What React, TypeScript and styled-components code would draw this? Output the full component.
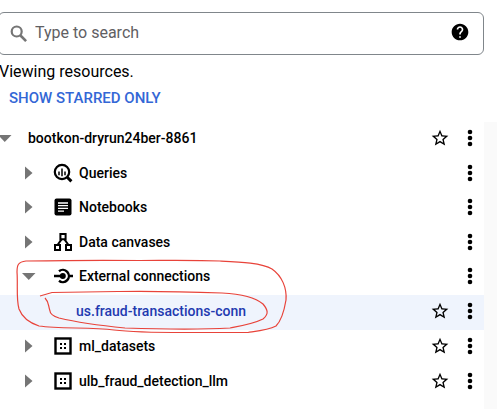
import React, { useState } from "react";
import styled, { createGlobalStyle, css } from "styled-components";
import { MdHelp, MdStarBorder } from "react-icons/md";

const GlobalStyle = createGlobalStyle`
  * { box-sizing: border-box; }
  body {
    margin: 0;
    background: #fff;
    color: #000;
    font-family: Roboto, "Liberation Sans", sans-serif;
    overflow: hidden;
  }
`;

const Explorer = styled.main`
  display: flex;
  flex-direction: column;
  min-height: 100vh;
  padding-top: 12px;
`;

const SearchBox = styled.label`
  display: flex;
  align-items: center;
  height: 43px;
  margin: 0 13px 0 -2px;
  padding: 0 11px;
  border: 1px solid #80868b;
  border-radius: 6px;
  color: #757575;
`;

const SearchInput = styled.input`
  flex: 1;
  min-width: 0;
  padding: 0 8px 2px 7px;
  border: 0;
  outline: 0;
  background: transparent;
  font: 400 16px/20px Roboto, "Liberation Sans", sans-serif;
  color: #000;
  &::placeholder { color: #5f6063; opacity: 1; }
`;

const IconButton = styled.button`
  display: flex;
  align-items: center;
  justify-content: center;
  flex: none;
  width: 24px;
  height: 24px;
  padding: 0;
  border: 0;
  background: none;
  color: #000;
  cursor: pointer;
`;

const HelpButton = styled(IconButton)`
  margin-bottom: 3px;
`;

const Status = styled.p`
  margin: 7px 0 0 -1px;
  font-size: 16px;
  line-height: 20px;
`;

const StarredButton = styled.button`
  align-self: flex-start;
  margin: 6px 0 14px;
  padding: 0 9px;
  border: 0;
  background: none;
  color: #3367d6;
  font: 500 15px/20px Roboto, "Liberation Sans", sans-serif;
  cursor: pointer;
`;

const TreeArea = styled.div`
  position: relative;
  display: grid;
  grid-template-columns: 1fr 13px;
  flex: 1;
`;

const Gutter = styled.div`
  background: #fafafa;
`;

const Tree = styled.ul`
  min-width: 0;
  margin: 0;
  padding: 0;
  list-style: none;
`;

const levelPadding = ["0", "17px", "76px"];

const Row = styled.li<{ $level: number; $selected?: boolean }>`
  display: flex;
  align-items: center;
  height: 34px;
  padding: 0 2px 2px ${(p) => levelPadding[p.$level]};
  &:nth-child(odd) { height: 35px; padding-bottom: 4px; }
  ${(p) =>
    p.$selected &&
    css`
      && { height: 35px; padding-bottom: 4px; }
      background: #eff4fd;
    `}
`;

const Caret = styled(IconButton)<{ $root?: boolean }>`
  color: #757575;
  ${(p) => p.$root && css`margin: 0 11px 0 -7px;`}
`;

const KindIcon = styled.svg`
  flex: none;
  width: 20px;
  height: 20px;
  margin: 0 6px 0 12px;
`;

const nameText = css`
  flex: 1;
  min-width: 0;
  font-size: 14px;
  line-height: 20px;
  font-weight: 500;
  white-space: nowrap;
`;

const Name = styled.span`
  ${nameText}
`;

const NameLink = styled.a`
  ${nameText}
  color: #1f3ab0;
  text-decoration: none;
`;

const StarButton = styled(IconButton)`
  margin-right: 6px;
`;

const Annotation = styled.svg`
  position: absolute;
  top: 133px;
  left: 0;
  width: 300px;
  height: 85px;
  pointer-events: none;
`;

type Kind = "queries" | "notebooks" | "canvases" | "connections" | "dataset";

const kindShapes: Record<Kind, React.ReactNode> = {
  queries: (
    <g fill="none" stroke="currentColor">
      <circle cx="9" cy="9" r="7.2" strokeWidth="2.2" />
      <path d="M14 14l4.4 4.4" strokeWidth="3" />
      <path d="M6 8.5v3.7M9 5.5v7.7M12 8.5v3.7" strokeWidth="1.5" />
    </g>
  ),
  notebooks: (
    <>
      <rect x="1.5" y="1.5" width="17" height="17" rx="2" fill="currentColor" />
      <path d="M5 6h10M5 8.7h10M5 11.4h10M5 14.1h6" stroke="#fff" strokeWidth="1.3" />
    </>
  ),
  canvases: (
    <g fill="none" stroke="currentColor" strokeWidth="2">
      <path d="M7.4 2h5.2v5.2H7.4zM2 13h5v5H2zM13 13h5v5h-5z" />
      <path d="M8.7 7.2L4.5 13M11.3 7.2l4.2 5.8" />
    </g>
  ),
  connections: (
    <g fill="none" stroke="currentColor">
      <path d="M6 5.2A6.1 6.1 0 1 1 6 14.8" strokeWidth="2.4" />
      <path d="M1 10h8M16 10h4" strokeWidth="2.6" />
      <circle cx="9.8" cy="10" r="3" fill="currentColor" stroke="none" />
    </g>
  ),
  dataset: (
    <>
      <rect x="2.5" y="2.5" width="15" height="15" fill="none" stroke="currentColor" strokeWidth="2.4" />
      <path d="M7 7h2v2H7zM11 7h2v2h-2zM7 11h2v2H7zM11 11h2v2h-2z" fill="currentColor" />
    </>
  ),
};

interface Item {
  name: string;
  level: number;
  kind?: Kind;
  open?: boolean;
  starrable?: boolean;
}

const items: Item[] = [
  { name: "bootkon-dryrun24ber-8861", level: 0, open: true, starrable: true },
  { name: "Queries", level: 1, kind: "queries" },
  { name: "Notebooks", level: 1, kind: "notebooks" },
  { name: "Data canvases", level: 1, kind: "canvases" },
  { name: "External connections", level: 1, kind: "connections", open: true },
  { name: "us.fraud-transactions-conn", level: 2, starrable: true },
  { name: "ml_datasets", level: 1, kind: "dataset", starrable: true },
  { name: "ulb_fraud_detection_llm", level: 1, kind: "dataset", starrable: true },
];

function ResourceRow({ item }: { item: Item }) {
  const leaf = item.level === 2;
  return (
    <Row $level={item.level} $selected={leaf}>
      {!leaf && (
        <Caret $root={item.level === 0} aria-label={`Toggle ${item.name}`} aria-expanded={!!item.open}>
          <svg width="14" height="14" viewBox="0 0 14 14" fill="currentColor">
            <path d={item.open ? "M0 4h13.5L6.75 11z" : "M3 .5v13l7.5-6.5z"} />
          </svg>
        </Caret>
      )}
      {item.kind && (
        <KindIcon viewBox="0 0 20 20" aria-hidden="true">
          {kindShapes[item.kind]}
        </KindIcon>
      )}
      {leaf ? <NameLink href="#connection">{item.name}</NameLink> : <Name>{item.name}</Name>}
      {item.starrable && (
        <StarButton aria-label={`Star ${item.name}`}>
          <MdStarBorder size={20} />
        </StarButton>
      )}
      <IconButton aria-label={`Actions for ${item.name}`}>
        <svg width="6" height="18" viewBox="0 0 6 18" fill="currentColor">
          <circle cx="3" cy="3" r="2.3" />
          <circle cx="3" cy="9" r="2.3" />
          <circle cx="3" cy="15" r="2.3" />
        </svg>
      </IconButton>
    </Row>
  );
}

export default function App() {
  const [query, setQuery] = useState("");
  return (
    <>
      <GlobalStyle />
      <Explorer>
        <SearchBox>
          <svg width="18" height="18" viewBox="0 0 18 18" fill="none" stroke="currentColor" aria-hidden="true">
            <circle cx="6.7" cy="6.5" r="5" strokeWidth="2.2" />
            <path d="M10.5 10.5l5.6 5.6" strokeWidth="2.6" />
          </svg>
          <SearchInput
            aria-label="Search resources"
            placeholder="Type to search"
            value={query}
            onChange={(e) => setQuery(e.target.value)}
          />
          <HelpButton aria-label="Search help">
            <MdHelp size={20} />
          </HelpButton>
        </SearchBox>
        <Status>Viewing resources.</Status>
        <StarredButton>SHOW STARRED ONLY</StarredButton>
        <TreeArea>
          <Tree>
            {items.map((item) => (
              <ResourceRow key={item.name} item={item} />
            ))}
          </Tree>
          <Gutter />
          <Annotation viewBox="0 255 300 85" fill="none" stroke="#e8433a" strokeWidth="1.2" aria-hidden="true">
            <path d="M140 260.5C100 260 55 260.5 26 261C18 262 17 265 17 272C18 285 16 299 19 309C22 317 30 323 39 326C60 329 90 327 114 330C130 332 150 332.5 185 332.5H248C258 331 268 330 276 326C281 321 284 312 286 300C287 288 282 276 272 269C262 263 240 262 220 261C195 260 165 260.5 140 260.5" />
            <path d="M40 296L52 292.5C75 292 95 292 118 291.5C155 291 195 292 222 293C242 294 256 298 263 304C268 310 269 314 263 319C253 324 240 326 230 328C195 330 155 329 125 328C105 326 80 323 59 318C53 316 50 314 50 311C48 305 49 302 45 298" />
          </Annotation>
        </TreeArea>
      </Explorer>
    </>
  );
}
